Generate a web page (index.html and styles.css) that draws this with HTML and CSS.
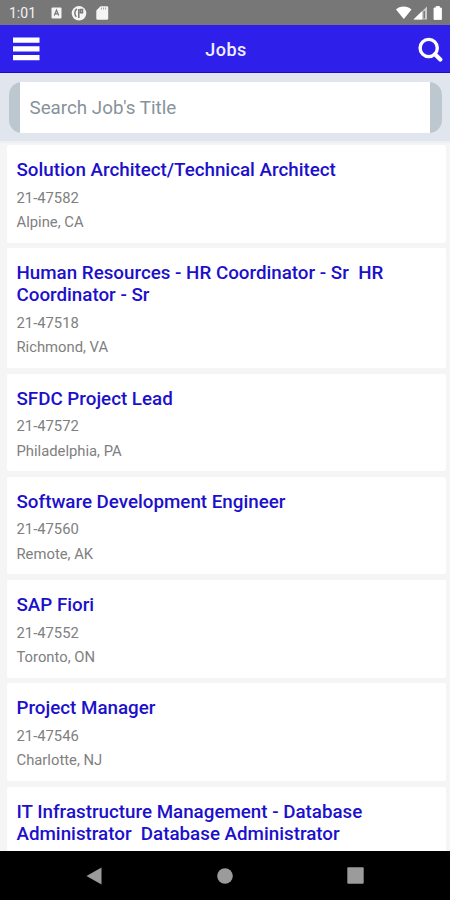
FILE: index.html
```html
<!DOCTYPE html>
<html lang="en">
<head>
    <meta charset="UTF-8">
    <meta name="viewport" content="width=device-width, initial-scale=1.0">
    <title>Jobs</title>
    <link rel="stylesheet" href="styles.css">
</head>
<body>
    <div class="status-bar">
        <span class="time">1:01</span>
        <svg class="notifications" width="60" height="16" viewBox="0 0 60 16">
            <rect x="1.500" y="2.500" width="10" height="11" rx="1" fill="#f4f4f4"/>
            <path d="M4.300 10.500L6.500 5L8.700 10.500M5 8.900h3" fill="none" stroke="#777" stroke-width="1.200"/>
            <circle cx="29" cy="8.300" r="7.300" fill="#f4f4f4"/>
            <path d="M26.800 3.800a5.500 5.500 0 0 0-0.500 8M28.800 4v9M30.500 4.500h2v3.200h-2z" fill="none" stroke="#777" stroke-width="1.500"/>
            <path d="M50.500 1.300H57a1.200 1.200 0 0 1 1.200 1.200V13.500a1.200 1.200 0 0 1-1.200 1.200H47.500a1.200 1.200 0 0 1-1.200-1.200V5.500z" fill="#f4f4f4"/>
            <path d="M51 3.500h5" stroke="#aaa" stroke-width="2" stroke-dasharray="1 1"/>
        </svg>
        <svg class="system" width="50" height="16" viewBox="0 0 50 16">
            <path d="M2 4.500C5.500 0.500 13.500 0.500 17.500 4.500L9.800 14z" fill="#fff"/>
            <path d="M19.500 14.500L33 1.500v13z" fill="#ccc"/>
            <path d="M19.500 14.500L28 6.300v8.200z" fill="#fff"/>
            <path d="M30.200 6v7.500" stroke="#777" stroke-width="1.500"/>
            <path d="M42 1.500h3.500v1.500h2v11.500h-7.500v-11.500H42z" fill="#fff" stroke="#fff" stroke-linejoin="round" stroke-width="0.800"/>
        </svg>
    </div>

    <header class="navbar">
        <button class="icon-btn" aria-label="Menu">
            <svg width="27" height="24" viewBox="0 0 27 24">
                <path d="M0 3.200h26.500M0 11.900h26.500M0 20.700h26.500" stroke="#fff" stroke-width="5.200"/>
            </svg>
        </button>
        <h1>Jobs</h1>
        <button class="icon-btn" aria-label="Search">
            <svg width="25" height="25" viewBox="0 0 25 25">
                <circle cx="10.700" cy="11" r="8.600" fill="none" stroke="#fff" stroke-width="3.400"/>
                <path d="M17 17.300L22.300 22.500" stroke="#fff" stroke-width="4.200" stroke-linecap="round"/>
            </svg>
        </button>
    </header>

    <div class="search-bar">
        <div class="search-box">
            <input type="text" class="search-input" placeholder="Search Job's Title">
        </div>
    </div>

    <main class="job-list">
        <div class="job">
            <h2>Solution Architect/Technical Architect</h2>
            <p>21-47582</p>
            <p>Alpine, CA</p>
        </div>
        <div class="job">
            <h2>Human Resources - HR Coordinator - Sr&nbsp; HR Coordinator - Sr</h2>
            <p>21-47518</p>
            <p>Richmond, VA</p>
        </div>
        <div class="job">
            <h2>SFDC Project Lead</h2>
            <p>21-47572</p>
            <p>Philadelphia, PA</p>
        </div>
        <div class="job">
            <h2>Software Development Engineer</h2>
            <p>21-47560</p>
            <p>Remote, AK</p>
        </div>
        <div class="job">
            <h2>SAP Fiori</h2>
            <p>21-47552</p>
            <p>Toronto, ON</p>
        </div>
        <div class="job">
            <h2>Project Manager</h2>
            <p>21-47546</p>
            <p>Charlotte, NJ</p>
        </div>
        <div class="job">
            <h2>IT Infrastructure Management - Database Administrator&nbsp; Database Administrator</h2>
        </div>
    </main>

    <footer class="android-nav">
        <svg width="16" height="18" viewBox="0 0 16 18">
            <path d="M0.500 9L15.500 0.500v17z" fill="#9b9b9b"/>
        </svg>
        <svg width="16" height="16" viewBox="0 0 16 16">
            <circle cx="8" cy="8" r="7.800" fill="#9b9b9b"/>
        </svg>
        <svg width="17" height="17" viewBox="0 0 17 17">
            <rect x="0.300" y="0.300" width="16.400" height="16.400" rx="1" fill="#9b9b9b"/>
        </svg>
    </footer>
</body>
</html>
```

FILE: styles.css
```css
* {
    box-sizing: border-box;
}

body {
    font-family: Roboto, sans-serif;
    margin: 0;
    height: 900px;
    display: flex;
    flex-direction: column;
    overflow: hidden;
    background: #f5f5f5;
}

h1, h2, p {
    margin: 0;
}

svg {
    display: block;
}

.status-bar {
    flex: none;
    height: 25px;
    padding: 1px 6px 0 9px;
    display: flex;
    align-items: center;
    background: #777;
    color: #f2f2f2;
}

.time {
    width: 41px;
    font-size: 14px;
    line-height: 24px;
}

.system {
    margin-left: auto;
}

.navbar {
    flex: none;
    height: 47.5px;
    padding: 2px 7px 0 13px;
    display: flex;
    align-items: center;
    justify-content: space-between;
    background: #2e20ea;
    border-bottom: 1px solid #1b0bc4;
}

.navbar h1 {
    margin-right: 6px;
    color: #f1efff;
    font-size: 18px;
    font-weight: 500;
    letter-spacing: 0.5px;
}

.icon-btn {
    padding: 0;
    border: none;
    background: none;
}

.search-bar {
    flex: none;
    height: 70.5px;
    padding: 9.5px 8px 10px 9px;
    background: #e1e6ee;
    border-bottom: 2px solid #edf0f3;
}

.search-box {
    height: 51px;
    padding: 0 12px 0 11px;
    border-radius: 13px;
    background: #bdc7cf;
}

.search-input {
    display: block;
    width: 100%;
    height: 100%;
    padding: 0 9.5px;
    border: none;
    background: #fff;
    font-family: inherit;
    font-size: 18.8px;
}

.search-input::placeholder {
    color: #87929b;
}

.job-list {
    flex: 1;
    min-height: 0;
    overflow: hidden;
    padding: 2px 4px 0 6.5px;
    display: flex;
    flex-direction: column;
    gap: 5.7px;
}

.job {
    flex: none;
    padding: 14px 10px 8.1px;
    border-radius: 2px;
    background: #fff;
}

.job h2 {
    margin-bottom: 4.5px;
    color: #1c10cc;
    font-size: 18.77px;
    font-weight: 500;
    line-height: 22px;
}

.job p {
    color: #808080;
    font-size: 14.8px;
    line-height: 24.5px;
}

.android-nav {
    flex: none;
    height: 49px;
    padding: 0 86px;
    display: flex;
    align-items: center;
    justify-content: space-between;
    background: #000;
}
```
